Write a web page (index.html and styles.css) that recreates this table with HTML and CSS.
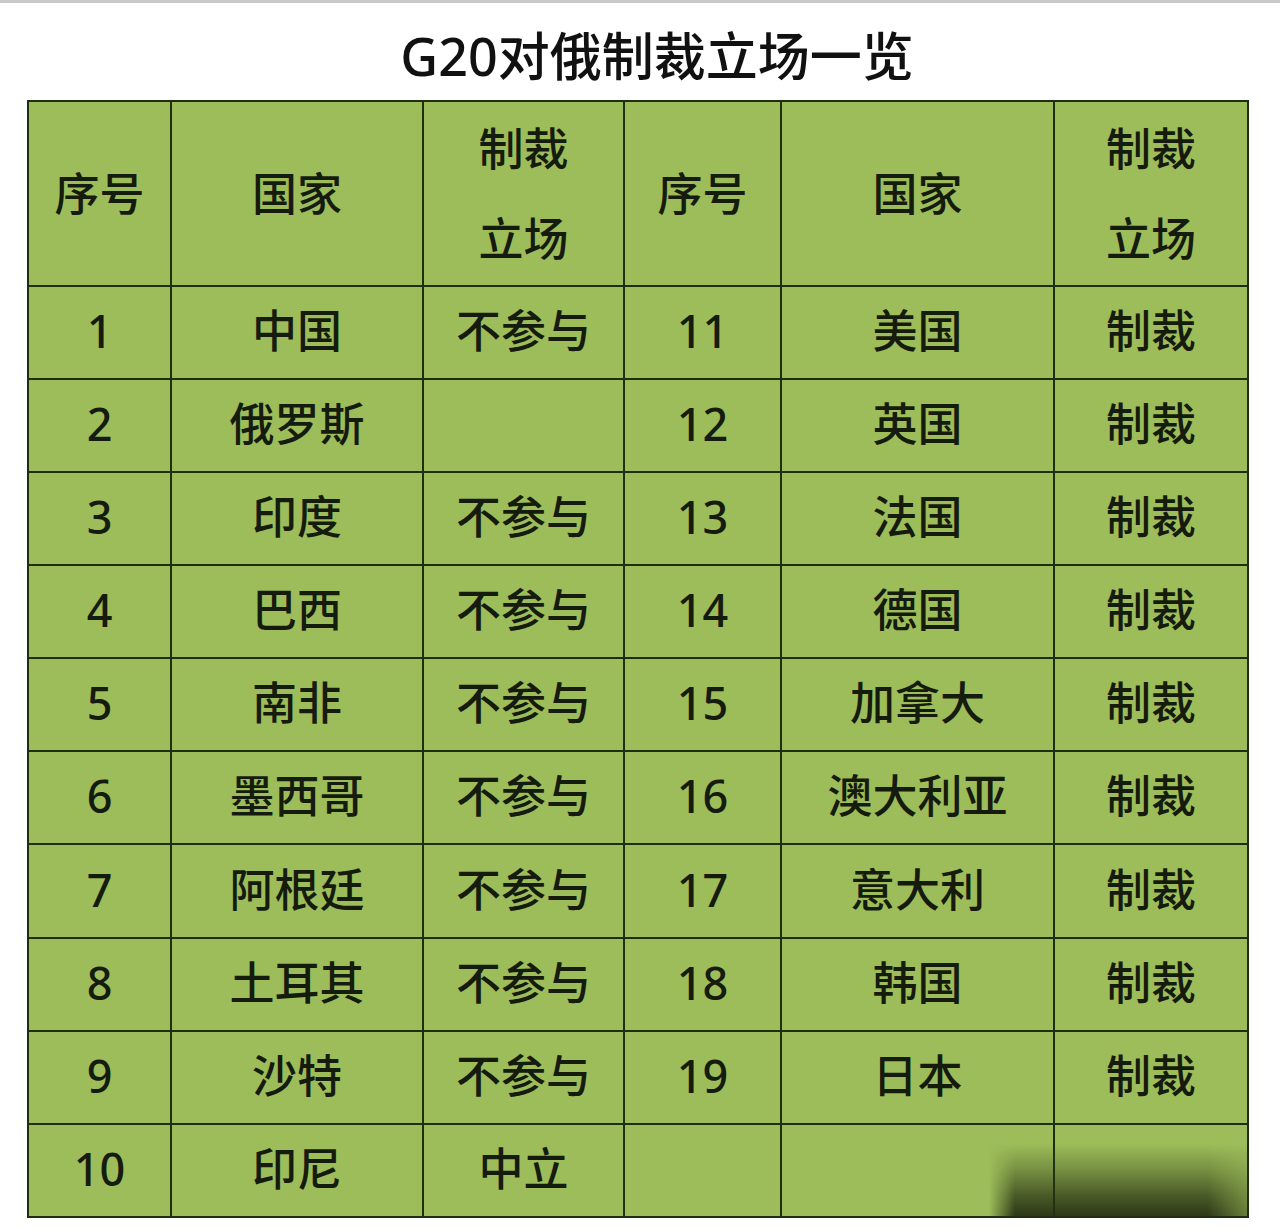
FILE: index.html
```html
<!DOCTYPE html>
<html lang="zh-CN">
<head>
<meta charset="utf-8">
<title>G20对俄制裁立场一览</title>
<link rel="stylesheet" href="styles.css">
</head>
<body>
<div class="page">
  <h1 class="title">G20对俄制裁立场一览</h1>
  <div class="table-wrap">
    <table class="grid">
      <colgroup>
        <col class="c1"><col class="c2"><col class="c3"><col class="c4"><col class="c5"><col class="c6">
      </colgroup>
      <thead>
        <tr class="head">
          <th>序号</th><th>国家</th><th>制裁<br>立场</th>
          <th>序号</th><th>国家</th><th>制裁<br>立场</th>
        </tr>
      </thead>
      <tbody>
        <tr><td>1</td><td>中国</td><td>不参与</td><td>11</td><td>美国</td><td>制裁</td></tr>
        <tr><td>2</td><td>俄罗斯</td><td></td><td>12</td><td>英国</td><td>制裁</td></tr>
        <tr><td>3</td><td>印度</td><td>不参与</td><td>13</td><td>法国</td><td>制裁</td></tr>
        <tr><td>4</td><td>巴西</td><td>不参与</td><td>14</td><td>德国</td><td>制裁</td></tr>
        <tr><td>5</td><td>南非</td><td>不参与</td><td>15</td><td>加拿大</td><td>制裁</td></tr>
        <tr><td>6</td><td>墨西哥</td><td>不参与</td><td>16</td><td>澳大利亚</td><td>制裁</td></tr>
        <tr class="tall"><td>7</td><td>阿根廷</td><td>不参与</td><td>17</td><td>意大利</td><td>制裁</td></tr>
        <tr><td>8</td><td>土耳其</td><td>不参与</td><td>18</td><td>韩国</td><td>制裁</td></tr>
        <tr><td>9</td><td>沙特</td><td>不参与</td><td>19</td><td>日本</td><td>制裁</td></tr>
        <tr><td>10</td><td>印尼</td><td>中立</td><td></td><td></td><td></td></tr>
      </tbody>
    </table>
    <div class="shade"></div>
  </div>
</div>
</body>
</html>
```

FILE: styles.css
```css
html, body {
  margin: 0;
  padding: 0;
  background: #ffffff;
}

.page {
  width: 1280px;
  height: 1231px;
  border-top: 3px solid #c9c9c9;
  box-sizing: border-box;
  font-family: "Noto Sans", "Noto Sans CJK SC", sans-serif;
  color: #141a0c;
}

.title {
  margin: 0;
  padding: 22px 0 0 34px;
  height: 75px;
  box-sizing: content-box;
  text-align: center;
  font-size: 52px;
  font-weight: 500;
  line-height: 62px;
  color: #111111;
}

.table-wrap {
  position: relative;
  margin-left: 27px;
  width: 1222px;
}

.grid {
  border-collapse: collapse;
  table-layout: fixed;
  width: 1220px;
  background: #9dbd5a;
}

.c1 { width: 143px; }
.c2 { width: 252px; }
.c3 { width: 201px; }
.c4 { width: 157px; }
.c5 { width: 273px; }
.c6 { width: 194px; }

.grid th,
.grid td {
  border: 2px solid #1e2e10;
  padding: 0;
  text-align: center;
  vertical-align: middle;
  font-size: 45px;
  font-weight: 500;
  color: #151b0d;
}

.grid .head th {
  height: 183px;
  line-height: 90px;
}

.grid .head {
  height: 185px;
}

.grid tbody tr {
  height: 93px;
}

.grid tbody tr.tall {
  height: 94px;
}

.grid td {
  line-height: 60px;
  padding-bottom: 3px;
}

.shade {
  position: absolute;
  left: 962px;
  bottom: 0;
  width: 260px;
  height: 74px;
  background: linear-gradient(to bottom, rgba(45, 58, 22, 0) 0%, rgba(45, 58, 22, 0.35) 35%, rgba(40, 52, 20, 0.72) 70%, rgba(35, 45, 18, 0.95) 100%);
  -webkit-mask-image: linear-gradient(to right, transparent 0%, #000 10%, #000 84%, rgba(0,0,0,0.45) 100%);
  mask-image: linear-gradient(to right, transparent 0%, #000 10%, #000 84%, rgba(0,0,0,0.45) 100%);
  pointer-events: none;
}
```
